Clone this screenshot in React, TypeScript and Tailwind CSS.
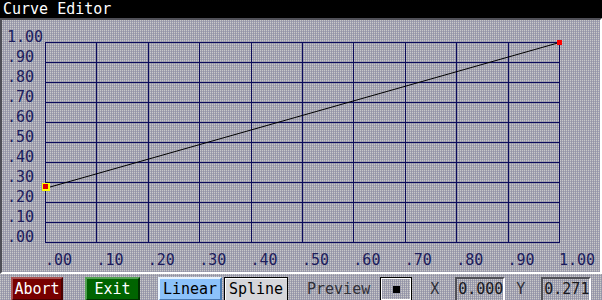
import React from 'react';

const yLabels = ['1.00', '.90', '.80', '.70', '.60', '.50', '.40', '.30', '.20', '.10', '.00'];
const xLabels = ['.00', '.10', '.20', '.30', '.40', '.50', '.60', '.70', '.80', '.90', '1.00'];

const dither =
  'bg-[image:conic-gradient(#9e9ea6_0_25%,#9090ae_0_50%,#a8a8ac_0_75%,#c6c6ce_0)] bg-[length:2px_2px]';

function CurveGrid({ y0, y1 }: { y0: number; y1: number }) {
  const cols = Array.from({ length: 11 }, (_, i) => Math.round(51.4 * i) + 0.5);
  const rows = Array.from({ length: 11 }, (_, i) => i * 20 + 0.5);
  const startY = 200.5 - y0 * 200;
  const endY = 200.5 - y1 * 200;
  return (
    <svg width={515} height={201} className="block overflow-visible shrink-0" shapeRendering="crispEdges">
      {cols.map((x) => (
        <line key={'c' + x} x1={x} y1={0} x2={x} y2={201} stroke="#0c0c5c" strokeWidth={1} />
      ))}
      {rows.map((y) => (
        <line key={'r' + y} x1={0} y1={y} x2={515} y2={y} stroke="#0c0c5c" strokeWidth={1} />
      ))}
      <line x1={0.5} y1={startY} x2={514.5} y2={endY} stroke="#000" strokeWidth={1} shapeRendering="auto" />
      <rect x={-3} y={141} width={8} height={8} fill="#ffff00" />
      <rect x={-2} y={142} width={5} height={5} fill="#e00000" />
      <rect x={512} y={-2} width={5} height={5} fill="#ff0000" />
    </svg>
  );
}

export default function App() {
  const y0 = 0.271;
  return (
    <div className="w-[602px] h-[300px] overflow-hidden bg-[#a8a8b0] font-['DejaVu_Sans_Mono',monospace] text-[15px] flex flex-col">
      <div className="h-[18px] bg-black text-white leading-[18px] pl-[3px] shrink-0">Curve Editor</div>

      <div className={`h-[256px] shrink-0 border-t-2 border-l-2 border-[#505058] border-r-2 border-b-2 border-r-white border-b-white ${dither}`}>
        <div className="flex items-start">
          <div className="w-[43px] shrink-0 mt-[7px] pl-[5px] flex flex-col text-[#1c1c5c]">
            {yLabels.map((l) => (
              <div key={l} className="h-[20px] leading-[20px]">{l}</div>
            ))}
          </div>
          <div className="mt-[22px]">
            <CurveGrid y0={y0} y1={1} />
          </div>
        </div>
        <div className="flex ml-[43px] mt-[6px] text-[#1c1c5c] leading-[15px]">
          {xLabels.map((l) => (
            <div key={l} className="w-[51.4px] shrink-0">{l}</div>
          ))}
        </div>
      </div>

      <div className={`flex-1 flex items-start pt-[3px] ${dither}`}>
        <button className="ml-[11px] w-[52px] h-[24px] border-2 border-[#a85050] border-r-[#4a0000] border-b-[#4a0000] bg-[#780000] text-white leading-[20px] text-center">
          Abort
        </button>
        <button className="ml-[22px] w-[55px] h-[24px] border-2 border-[#50a050] border-r-[#003000] border-b-[#003000] bg-[#006400] text-white leading-[20px] text-center">
          Exit
        </button>
        <button className="ml-[18px] w-[64px] h-[24px] border-2 border-[#e8f4ff] border-r-[#4878b0] border-b-[#4878b0] bg-[#8cc2fa] text-black leading-[20px] text-center">
          Linear
        </button>
        <button className="ml-[2px] w-[64px] h-[24px] border border-black bg-[#d6d6da] shadow-[inset_1px_1px_0_#ffffff] text-black leading-[22px] text-center">
          Spline
        </button>
        <span className="ml-[19px] mt-[2px] leading-[20px] text-[#303038]">Preview</span>
        <button className={`ml-[10px] w-[32px] h-[24px] border border-black shadow-[inset_1px_1px_0_#ffffff,inset_-1px_-1px_0_#ffffff] flex items-center justify-center ${dither}`}>
          <span className="block w-[7px] h-[7px] bg-black" />
        </button>
        <span className="ml-[18px] mt-[2px] leading-[20px] text-[#303038]">X</span>
        <div className={`ml-[16px] w-[50px] h-[24px] border-t-2 border-l-2 border-[#505058] border-r-2 border-r-white pl-[1px] leading-[20px] text-[#18181c] ${dither}`}>
          0.000
        </div>
        <span className="ml-[11px] mt-[2px] leading-[20px] text-[#303038]">Y</span>
        <div className={`ml-[16px] w-[50px] h-[24px] border-t-2 border-l-2 border-[#505058] border-r-2 border-r-white pl-[1px] leading-[20px] text-[#18181c] ${dither}`}>
          {y0.toFixed(3)}
        </div>
      </div>
    </div>
  );
}
